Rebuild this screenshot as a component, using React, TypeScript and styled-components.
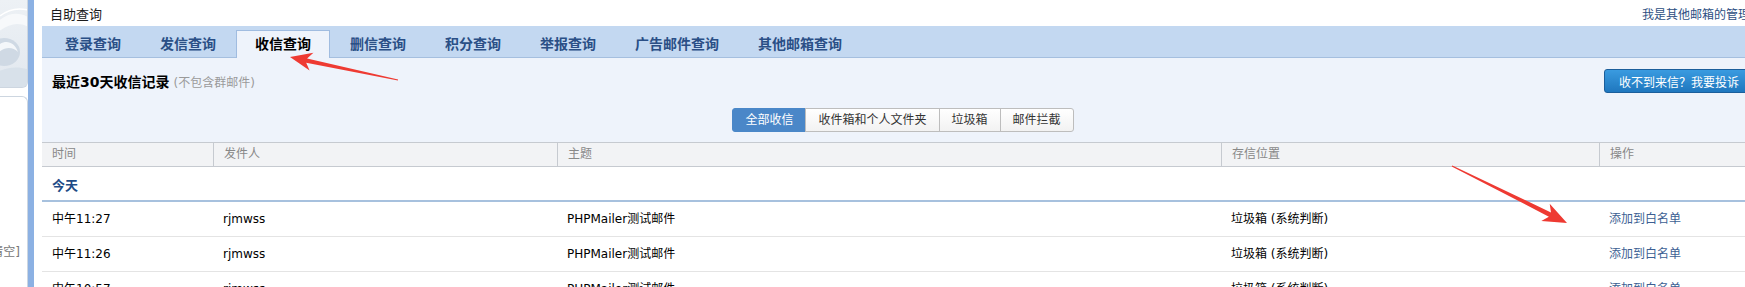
import React from 'react';
import styled, { createGlobalStyle } from 'styled-components';

const GlobalStyle = createGlobalStyle`
  html, body {
    margin: 0;
    padding: 0;
    background: #fff;
    overflow: hidden;
  }
  body {
    font-family: "DejaVu Sans", "Noto Sans CJK SC", sans-serif;
    font-size: 12px;
    color: #000;
  }
`;

const Page = styled.div`
  position: relative;
  display: flex;
  width: 1745px;
  height: 287px;
  overflow: hidden;
`;

const Sidebar = styled.div`
  width: 28px;
  flex: none;
  display: flex;
  flex-direction: column;
  gap: 8px;
`;

const LogoPanel = styled.div`
  height: 88px;
  flex: none;
  box-sizing: border-box;
  border-right: 1px solid #cdd6e0;
  border-bottom: 1px solid #cdd6e0;
  border-bottom-right-radius: 6px;
  background: linear-gradient(180deg, #edf1f5 0%, #e2e8ef 100%);
  overflow: hidden;
`;

const SidePanel = styled.div`
  flex: 1;
  box-sizing: border-box;
  border-right: 1px solid #cdd6e0;
  border-top: 1px solid #cdd6e0;
  border-top-right-radius: 6px;
  display: flex;
  align-items: flex-end;
  justify-content: flex-end;
  padding: 0 7px 28px 0;
  overflow: hidden;
  white-space: nowrap;
  color: #777;
`;

const BlueBar = styled.div`
  width: 6px;
  flex: none;
  background: #8cb1e3;
`;

const Main = styled.div`
  width: 1720px;
  flex: none;
  margin-left: 8px;
`;

const TitleRow = styled.div`
  height: 26px;
  display: flex;
  align-items: center;
  justify-content: space-between;
  padding: 0 0 0 8px;
`;

const Title = styled.div`
  font-size: 13px;
  color: #1c1c1c;
`;

const AdminLink = styled.a`
  font-size: 12px;
  color: #2d4f82;
  text-decoration: none;
  white-space: nowrap;
`;

const TabBar = styled.div`
  height: 31px;
  display: flex;
  align-items: flex-end;
  padding-left: 4px;
  background: #c3d8f1;
  border-bottom: 1px solid #a5bfdf;
`;

const Tab = styled.div<{ $active?: boolean }>`
  height: 28px;
  box-sizing: border-box;
  margin: 0 1px -1px 0;
  padding: 0 18px;
  line-height: 26px;
  border: 1px solid ${(p) => (p.$active ? '#a0bce0' : 'transparent')};
  border-bottom: none;
  background: ${(p) => (p.$active ? '#eef3fb' : 'transparent')};
  color: ${(p) => (p.$active ? '#000' : '#2a4f86')};
  font-size: 14px;
  font-weight: bold;
  white-space: nowrap;
`;

const Toolbar = styled.div`
  background: #eef3fb;
  padding: 11px 8px 10px 10px;
`;

const HeadingRow = styled.div`
  height: 24px;
  display: flex;
  align-items: center;
  justify-content: space-between;
`;

const Heading = styled.div`
  font-size: 14px;
  font-weight: bold;
  color: #000;
`;

const Note = styled.span`
  margin-left: 4px;
  font-size: 12px;
  font-weight: normal;
  color: #9a9a9a;
`;

const ComplainButton = styled.button`
  height: 24px;
  padding: 0 14px;
  border: 1px solid #1b5e9b;
  border-radius: 3px;
  background: linear-gradient(180deg, #3a9be0 0%, #1f77be 100%);
  color: #fff;
  font-family: inherit;
  font-size: 12px;
  white-space: nowrap;
`;

const FilterRow = styled.div`
  display: flex;
  justify-content: center;
  margin-top: 15px;
`;

const FilterButton = styled.div<{ $active?: boolean }>`
  height: 24px;
  box-sizing: border-box;
  padding: 0 12px;
  line-height: 22px;
  border: 1px solid ${(p) => (p.$active ? '#4a87c8' : '#bdbdbd')};
  background: ${(p) => (p.$active ? '#4a87c8' : 'linear-gradient(180deg, #ffffff 0%, #f2f2f2 100%)')};
  color: ${(p) => (p.$active ? '#fff' : '#333')};
  font-size: 12px;
  white-space: nowrap;

  & + & {
    margin-left: -1px;
  }
  &:first-child {
    border-radius: 3px 0 0 3px;
  }
  &:last-child {
    border-radius: 0 3px 3px 0;
  }
`;

const columns = '171px 344px 664px 378px 1fr';

const HeaderRow = styled.div`
  display: grid;
  grid-template-columns: ${columns};
  height: 25px;
  box-sizing: border-box;
  background: #f2f3f5;
  border-top: 1px solid #c6cad0;
  border-bottom: 1px solid #c6cad0;
`;

const HeaderCell = styled.div`
  padding-left: 10px;
  line-height: 23px;
  color: #888;
  white-space: nowrap;

  & + & {
    border-left: 1px solid #c6cad0;
  }
`;

const GroupRow = styled.div`
  height: 35px;
  box-sizing: border-box;
  padding: 5px 0 0 10px;
  line-height: 28px;
  font-size: 13px;
  font-weight: bold;
  color: #1e4b86;
  border-bottom: 2px solid #a7c1de;
`;

const DataRow = styled.div`
  display: grid;
  grid-template-columns: ${columns};
  height: 35px;
  box-sizing: border-box;
  border-bottom: 1px solid #e4e4e4;
`;

const Cell = styled.div<{ $link?: boolean }>`
  padding-left: 10px;
  line-height: 34px;
  white-space: nowrap;
  color: ${(p) => (p.$link ? '#3d5f93' : '#000')};
`;

const Overlay = styled.svg`
  position: absolute;
  left: 0;
  top: 0;
  pointer-events: none;
`;

type Pt = [number, number];

// red annotation arrow: thin tail widening to a barbed head
const arrowPoints = (tail: Pt, tip: Pt, headLen: number, headHalf: number, neck: number) => {
  const dx = tip[0] - tail[0];
  const dy = tip[1] - tail[1];
  const len = Math.hypot(dx, dy);
  const ux = dx / len;
  const uy = dy / len;
  const nx = -uy;
  const ny = ux;
  const bx = tip[0] - ux * headLen;
  const by = tip[1] - uy * headLen;
  const ix = tip[0] - ux * (headLen - 5);
  const iy = tip[1] - uy * (headLen - 5);
  const pts: Pt[] = [
    [tail[0] + nx * 0.6, tail[1] + ny * 0.6],
    [ix + nx * neck, iy + ny * neck],
    [bx + nx * headHalf, by + ny * headHalf],
    tip,
    [bx - nx * headHalf, by - ny * headHalf],
    [ix - nx * neck, iy - ny * neck],
    [tail[0] - nx * 0.6, tail[1] - ny * 0.6],
  ];
  return pts.map((p) => `${p[0].toFixed(1)},${p[1].toFixed(1)}`).join(' ');
};

const tabs = ['登录查询', '发信查询', '收信查询', '删信查询', '积分查询', '举报查询', '广告邮件查询', '其他邮箱查询'];
const filters = ['全部收信', '收件箱和个人文件夹', '垃圾箱', '邮件拦截'];

const rows = [
  { time: '中午11:27', from: 'rjmwss', subject: 'PHPMailer测试邮件', place: '垃圾箱 (系统判断)' },
  { time: '中午11:26', from: 'rjmwss', subject: 'PHPMailer测试邮件', place: '垃圾箱 (系统判断)' },
  { time: '中午10:57', from: 'rjmwss', subject: 'PHPMailer测试邮件', place: '垃圾箱 (系统判断)' },
];

const App = () => {
  return (
    <>
      <GlobalStyle />
      <Page>
        <Sidebar>
          <LogoPanel>
            <svg width="28" height="88" viewBox="0 0 28 88">
              <path d="M-10 30 C 5 10, 20 12, 30 18 L 30 28 C 18 20, 4 24, -10 40 Z" fill="#f7f9fb" />
              <ellipse cx="4" cy="52" rx="16" ry="14" fill="#cfd9e4" />
              <path d="M-6 50 C 2 38, 14 40, 18 52 C 12 46, 2 46, -6 58 Z" fill="#f4f7fa" />
              <path d="M-10 76 C 6 66, 18 66, 30 70 L 30 88 L -10 88 Z" fill="#d8e1ea" />
              <path d="M0 16 C 10 8, 20 8, 28 10" stroke="#fff" strokeWidth="1.5" fill="none" />
            </svg>
          </LogoPanel>
          <SidePanel>[清空]</SidePanel>
        </Sidebar>
        <BlueBar />
        <Main>
          <TitleRow>
            <Title>自助查询</Title>
            <AdminLink>我是其他邮箱的管理员</AdminLink>
          </TitleRow>
          <TabBar>
            {tabs.map((t) => (
              <Tab key={t} $active={t === '收信查询'}>
                {t}
              </Tab>
            ))}
          </TabBar>
          <Toolbar>
            <HeadingRow>
              <Heading>
                最近30天收信记录<Note>(不包含群邮件)</Note>
              </Heading>
              <ComplainButton>收不到来信？我要投诉</ComplainButton>
            </HeadingRow>
            <FilterRow>
              {filters.map((f, i) => (
                <FilterButton key={f} $active={i === 0}>
                  {f}
                </FilterButton>
              ))}
            </FilterRow>
          </Toolbar>
          <HeaderRow>
            <HeaderCell>时间</HeaderCell>
            <HeaderCell>发件人</HeaderCell>
            <HeaderCell>主题</HeaderCell>
            <HeaderCell>存信位置</HeaderCell>
            <HeaderCell>操作</HeaderCell>
          </HeaderRow>
          <GroupRow>今天</GroupRow>
          {rows.map((r, i) => (
            <DataRow key={i}>
              <Cell>{r.time}</Cell>
              <Cell>{r.from}</Cell>
              <Cell>{r.subject}</Cell>
              <Cell>{r.place}</Cell>
              <Cell $link>添加到白名单</Cell>
            </DataRow>
          ))}
        </Main>
        <Overlay width="1745" height="287" viewBox="0 0 1745 287">
          <polygon points={arrowPoints([398, 80], [290, 57], 22, 9, 2.2)} fill="#ee3a32" />
          <polygon points={arrowPoints([1452, 166], [1567, 223], 24, 9.5, 2.4)} fill="#ee3a32" />
        </Overlay>
      </Page>
    </>
  );
};

export default App;
